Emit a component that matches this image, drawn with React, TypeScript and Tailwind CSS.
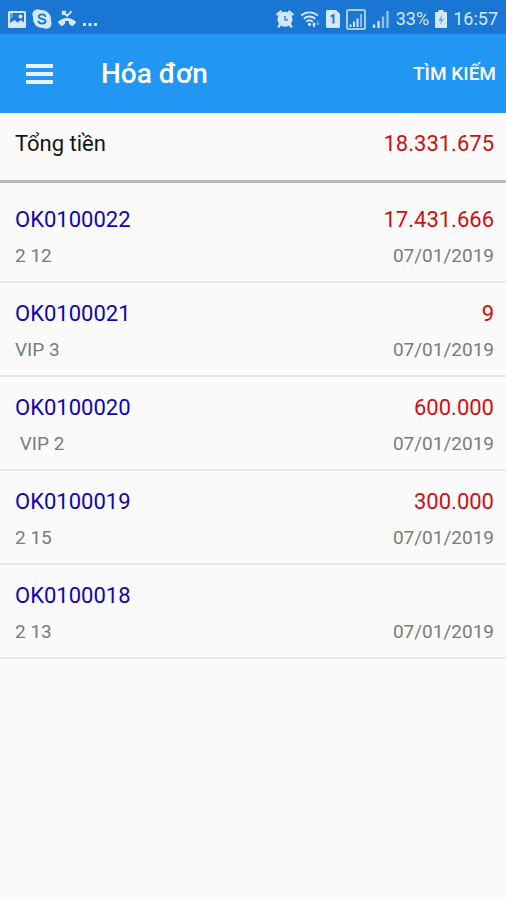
import React from 'react';

interface Invoice {
  code: string;
  table: string;
  amount: string;
  date: string;
}

interface IconProps {
  className?: string;
}

const invoices: Invoice[] = [
  { code: 'OK0100022', table: '2 12', amount: '17.431.666', date: '07/01/2019' },
  { code: 'OK0100021', table: 'VIP 3', amount: '9', date: '07/01/2019' },
  { code: 'OK0100020', table: ' VIP 2', amount: '600.000', date: '07/01/2019' },
  { code: 'OK0100019', table: '2 15', amount: '300.000', date: '07/01/2019' },
  { code: 'OK0100018', table: '2 13', amount: '', date: '07/01/2019' },
];

const PictureIcon: React.FC<IconProps> = ({ className }) => (
  <svg className={className} viewBox="0 0 18 17" fill="none" aria-hidden="true">
    <rect x="1" y="1" width="16" height="15" rx="0.5" stroke="currentColor" strokeWidth="2" />
    <path d="M2 12 6.500 9l3 2.500L13 9l3 2.500V15H2z" fill="currentColor" />
    <path d="M2 2h3v3.500L2 9z" fill="currentColor" opacity="0.4" />
    <circle cx="12.500" cy="5.500" r="2" fill="currentColor" />
  </svg>
);

const SkypeIcon: React.FC<IconProps> = ({ className }) => (
  <svg className={className} viewBox="0 0 20 20" fill="none" aria-hidden="true">
    <circle cx="10" cy="10" r="9" fill="currentColor" />
    <circle cx="5.8" cy="5.6" r="5.4" fill="currentColor" />
    <circle cx="14.2" cy="14.4" r="5.4" fill="currentColor" />
    <path
      d="M13.4 7.3C12.900 6 11.700 5.400 10 5.400c-1.900 0-3.300.8-3.300 2.200 0 3.100 6.800 1.600 6.800 4.600 0 1.500-1.500 2.300-3.500 2.300-1.800 0-3.100-.7-3.500-2.100"
      stroke="#1976d2"
      strokeWidth="1.8"
      strokeLinecap="round"
    />
  </svg>
);

const MissedCallIcon: React.FC<IconProps> = ({ className }) => (
  <svg className={className} viewBox="0 0 18 18" fill="none" aria-hidden="true">
    <path d="M4.500 1.500 9 5.800l4.700-4.700M4.800 5V1.800H8" stroke="currentColor" strokeWidth="1.900" />
    <path
      d="M9 8c-3.300 0-6.300 1.300-8.600 3.500-.5.400-.5 1 0 1.500l2.700 2.700c.4.400 1 .4 1.400.1l2-1.500c.3-.2.500-.5.500-.9v-2c1.300-.4 2.700-.4 4 0v2c0 .4.200.7.500.9l2 1.500c.4.300 1 .3 1.400-.1l2.700-2.700c.5-.5.500-1.100 0-1.500C15.300 9.300 12.300 8 9 8z"
      fill="currentColor"
    />
  </svg>
);

const MoreDotsIcon: React.FC<IconProps> = ({ className }) => (
  <svg className={className} viewBox="0 0 16 18" fill="currentColor" aria-hidden="true">
    <rect x="1" y="13" width="3" height="3" />
    <rect x="6.500" y="13" width="3" height="3" />
    <rect x="12" y="13" width="3" height="3" />
  </svg>
);

const AlarmIcon: React.FC<IconProps> = ({ className }) => (
  <svg className={className} viewBox="0 0 18 18" fill="none" aria-hidden="true">
    <path
      d="M1.500 4.500 4.800 1.600M16.500 4.500l-3.300-2.900M4.200 14.500 2.800 16.500M13.800 14.500l1.400 2"
      stroke="currentColor"
      strokeWidth="2.400"
      strokeLinecap="round"
    />
    <circle cx="9" cy="9.300" r="7.500" fill="currentColor" />
    <path d="M9 6v3.800h3" stroke="#1976d2" strokeWidth="1.300" />
  </svg>
);

const WifiIcon: React.FC<IconProps> = ({ className }) => (
  <svg className={className} viewBox="0 0 20 18" fill="none" aria-hidden="true">
    <path d="M1.200 5.500c4.800-4.200 11.800-4.200 16.600 0" stroke="currentColor" strokeWidth="1.900" />
    <path d="M3.800 8.700c3.300-2.900 8.100-2.900 11.400 0" stroke="currentColor" strokeWidth="1.900" />
    <path d="M6.300 11.700c1.900-1.600 4.500-1.600 6.400 0" stroke="currentColor" strokeWidth="1.900" />
    <circle cx="9.500" cy="14.400" r="1.600" fill="currentColor" />
    <path d="m12 14.500 2-2.500 2 2.500h-1V17h-2v-2.500z" fill="currentColor" />
    <path d="M17.800 10v4.500M16.300 13l1.500 2 1.500-2" stroke="currentColor" strokeWidth="1" opacity="0.45" />
  </svg>
);

const SimIcon: React.FC<IconProps> = ({ className }) => (
  <svg className={className} viewBox="0 0 14 18" fill="none" aria-hidden="true">
    <path d="M1.500 0H10l4 4v12.500c0 .8-.7 1.500-1.500 1.500h-11C.7 18 0 17.300 0 16.500v-15C0 .7.7 0 1.500 0z" fill="currentColor" />
    <path d="M4.700 6.500 7.500 5v8.500" stroke="#1976d2" strokeWidth="1.900" />
  </svg>
);

const BoxedSignalIcon: React.FC<IconProps> = ({ className }) => (
  <svg className={className} viewBox="0 0 20 21" fill="none" aria-hidden="true">
    <rect x="1" y="1" width="18" height="19" rx="1" stroke="currentColor" strokeWidth="1.500" />
    <path d="M4.500 15.500V18M8 12.500V18M11.500 9.500V18" stroke="currentColor" strokeWidth="2" />
    <path d="M15 5v13" stroke="currentColor" strokeWidth="2" opacity="0.6" />
  </svg>
);

const SignalIcon: React.FC<IconProps> = ({ className }) => (
  <svg className={className} viewBox="0 0 18 18" fill="none" aria-hidden="true">
    <path d="M2 14.500V18M6.500 11V18" stroke="currentColor" strokeWidth="2.400" />
    <path d="M11 6.500V18M15.500 1v17" stroke="currentColor" strokeWidth="2.400" opacity="0.65" />
  </svg>
);

const BatteryIcon: React.FC<IconProps> = ({ className }) => (
  <svg className={className} viewBox="0 0 12 18" fill="none" aria-hidden="true">
    <path d="M3.500 0h5v2H11c.6 0 1 .4 1 1v14c0 .6-.4 1-1 1H1c-.6 0-1-.4-1-1V3c0-.6.4-1 1-1h2.500z" fill="currentColor" />
    <path d="M7 4.500 3.500 10.500H6l-.8 4.500 3.500-6H6.200z" fill="#1976d2" opacity="0.6" />
  </svg>
);

const MenuIcon: React.FC<IconProps> = ({ className }) => (
  <svg className={className} viewBox="0 0 27 20" fill="currentColor" aria-hidden="true">
    <rect width="27" height="4" />
    <rect y="8" width="27" height="4" />
    <rect y="16" width="27" height="4" />
  </svg>
);

const StatusBar: React.FC = () => (
  <div className="flex h-[34px] items-center justify-between bg-[#1976d2] px-2 pt-1 text-lg leading-6 text-[#d3e9fb]">
    <div className="flex items-center gap-[6px]">
      <PictureIcon className="h-[17px] w-[18px]" />
      <SkypeIcon className="size-5" />
      <MissedCallIcon className="size-[18px]" />
      <MoreDotsIcon className="h-[18px] w-4" />
    </div>
    <div className="flex items-center gap-[6px]">
      <AlarmIcon className="size-[18px]" />
      <WifiIcon className="h-[18px] w-5" />
      <SimIcon className="h-[18px] w-[14px]" />
      <BoxedSignalIcon className="h-[21px] w-5" />
      <SignalIcon className="size-[18px]" />
      <span>33%</span>
      <BatteryIcon className="h-[18px] w-3" />
      <span>16:57</span>
    </div>
  </div>
);

const InvoiceRow: React.FC<{ invoice: Invoice }> = ({ invoice }) => (
  <li className="border-b-2 border-[#e9e9e9] pt-[17px] pr-3 pb-[13px] pl-[15px]">
    <div className="flex h-7 items-center justify-between text-[22px] leading-7">
      <span className="text-[#1204b4]">{invoice.code}</span>
      <span className="text-[#cf1010]">{invoice.amount}</span>
    </div>
    <div className="mt-[10px] flex items-center justify-between text-[19px] leading-6 text-[#7b7b7b]">
      <span className="whitespace-pre">{invoice.table}</span>
      <span>{invoice.date}</span>
    </div>
  </li>
);

const App: React.FC = () => {
  return (
    <div className="min-h-screen bg-[#fafafa] font-['Roboto',sans-serif]">
      <StatusBar />
      <header className="flex h-[79px] items-center bg-[#2196f3] pr-[10px] pl-[26px] text-white">
        <button type="button" aria-label="Menu">
          <MenuIcon className="h-5 w-[27px] text-[#e3f3fe]" />
        </button>
        <h1 className="ml-12 flex-1 text-[28px] leading-8 font-medium">Hóa đơn</h1>
        <button type="button" className="text-[19px] leading-6 font-medium">TÌM KIẾM</button>
      </header>
      <main>
        <div className="flex items-center justify-between border-b-3 border-[#bababa] pt-[17px] pr-3 pb-[22px] pl-[15px] text-[22px] leading-7">
          <span className="text-[#151515]">Tổng tiền</span>
          <span className="text-[#cf1010]">18.331.675</span>
        </div>
        <ul className="pt-[6px]">
          {invoices.map(invoice => (
            <InvoiceRow key={invoice.code} invoice={invoice} />
          ))}
        </ul>
      </main>
    </div>
  );
};

export default App;
